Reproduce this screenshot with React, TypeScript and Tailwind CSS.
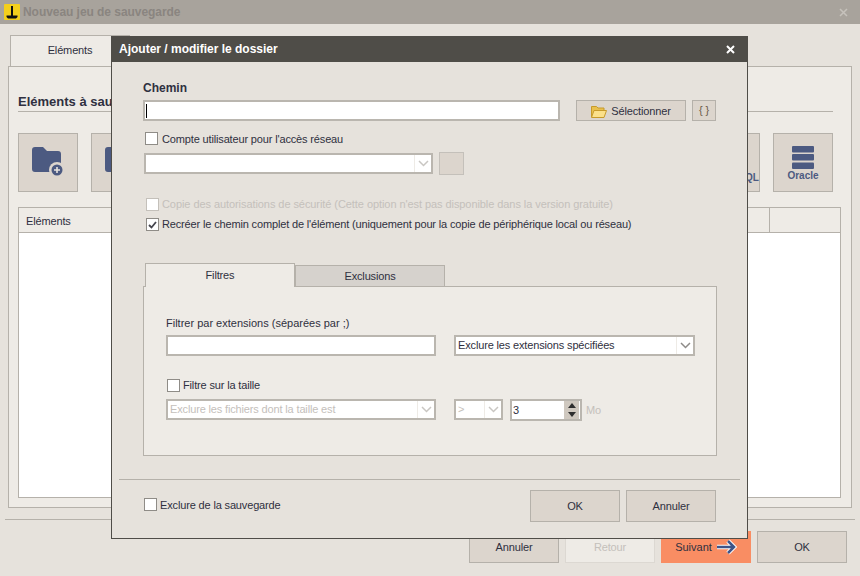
import { ReactNode } from "react";

const Chevron = ({ light }: { light?: boolean }) => (
  <svg width="11" height="7" viewBox="0 0 11 7" fill="none">
    <path d="M1 1l4.5 4.5L10 1" stroke={light ? "#c9c6c2" : "#8e8b88"} strokeWidth="1.5" />
  </svg>
);

const Check = ({ checked, dim }: { checked?: boolean; dim?: boolean }) => (
  <span className={`flex h-[13px] w-[13px] shrink-0 items-center justify-center border bg-white ${dim ? "border-[#c4c0ba]" : "border-[#8f8c87]"}`}>
    {checked && (
      <svg width="9" height="8" viewBox="0 0 9 8" fill="none">
        <path d="M1 4l2.5 2.5L8 1" stroke="#44444c" strokeWidth="1.8" />
      </svg>
    )}
  </span>
);

const Combo = ({ text, dim, className }: { text?: string; dim?: boolean; className: string }) => (
  <div className={`flex h-[21px] items-center border-2 border-[#bab6af] bg-white ${className}`}>
    <span className={`min-w-0 flex-1 overflow-hidden whitespace-nowrap pl-[2px] leading-[17px] ${dim ? "text-[#c4c0bb]" : ""}`}>{text}</span>
    <span className="flex h-full w-[17px] items-center justify-center border-l border-[#eeebe6]">
      <Chevron light={dim} />
    </span>
  </div>
);

const Btn = ({ children, className = "" }: { children: ReactNode; className?: string }) => (
  <button className={`flex items-center justify-center border border-[#b5b1aa] bg-[#dcd5cd] ${className}`}>{children}</button>
);

const FolderPlus = () => (
  <svg width="33" height="31" viewBox="0 0 33 31">
    <path d="M0 3a3 3 0 0 1 3-3h8l4 4h11a3 3 0 0 1 3 3v15a3 3 0 0 1-3 3H3a3 3 0 0 1-3-3z" fill="#4c5a81" />
    <circle cx="25" cy="23" r="8" fill="#dcd5cd" />
    <circle cx="25" cy="23" r="5.5" fill="#4c5a81" />
    <path d="M25 20v6M22 23h6" stroke="#e8e4df" strokeWidth="1.6" />
  </svg>
);

const StackIcon = () => (
  <svg width="22" height="23" viewBox="0 0 22 23" fill="#4c5a81">
    <rect width="22" height="6.5" rx="1" />
    <rect y="8" width="22" height="6.5" rx="1" />
    <rect y="16.500" width="22" height="6.5" rx="1" />
  </svg>
);

const FolderOpen = () => (
  <svg width="16" height="13" viewBox="0 0 16 13">
    <path d="M.5 12V1.500h5l1.500 1.500h6v2.500" fill="#e9c04e" stroke="#c79a2a" />
    <path d="M.5 12.500l2.500-7h12.500l-2.500 7z" fill="#fbe08a" stroke="#c79a2a" />
  </svg>
);

const ArrowRight = () => (
  <svg width="21" height="16" viewBox="0 0 21 16">
    <path d="M1 8h16M12 2l6 6-6 6" fill="none" stroke="#fff" strokeWidth="4.500" />
    <path d="M1 8h16M12 2l6 6-6 6" fill="none" stroke="#3f5488" strokeWidth="2.500" />
  </svg>
);

const Logo = () => (
  <svg width="16" height="16" viewBox="0 0 16 16" className="ml-1 shrink-0">
    <rect width="16" height="16" rx="1" fill="#f4cf1c" />
    <path d="M7 2h2v9.500h4.500v1.500L12 14.500H4L2.500 13v-1.500H7z" fill="#111" />
  </svg>
);

const Dialog = () => (
  <div className="absolute left-[111px] top-[36px] flex h-[503px] w-[637px] flex-col border-b border-l border-r border-[#4f4d48] bg-[#e6e2dc]">
    <div className="-mx-px flex h-[26px] shrink-0 items-center justify-between bg-[#4f4d48] pl-[8px] pr-[13px] text-[12px] tracking-normal text-white">
      <span className="font-bold">Ajouter / modifier le dossier</span>
      <svg width="9" height="9" viewBox="0 0 9 9" fill="none">
        <path d="M1 1l7 7M8 1L1 8" stroke="#fff" strokeWidth="2" />
      </svg>
    </div>

    <div className="flex-1 pl-[31px]">
      <div className="mt-[18px] h-[20px] text-[12px] font-bold leading-[16px] tracking-normal">Chemin</div>
      <div className="flex items-center">
        <div className="flex h-[21px] w-[417px] items-center border-2 border-[#bab6af] bg-white pl-[1px]">
          <span className="h-[14px] w-px bg-black" />
        </div>
        <Btn className="ml-[16px] h-[21px] w-[110px] gap-[4px] pt-px">
          <FolderOpen />
          Sélectionner
        </Btn>
        <Btn className="ml-[6px] h-[21px] w-[24px] text-[#6b5a48]">{"{ }"}</Btn>
      </div>

      <div className="ml-[2px] mt-[11px] flex items-center gap-[4px]">
        <Check />
        <span className="pt-px">Compte utilisateur pour l'accès réseau</span>
      </div>
      <div className="ml-px mt-[7px] flex items-center gap-[6px]">
        <Combo dim className="w-[289px]" />
        <span className="h-[23px] w-[25px] border border-[#c4c0ba] bg-[#dcd5cd]" />
      </div>

      <div className="ml-[3px] mt-[23px] flex items-center gap-[3px] tracking-[-0.07px] text-[#c4c0bb]">
        <Check dim />
        <span>Copie des autorisations de sécurité (Cette option n'est pas disponible dans la version gratuite)</span>
      </div>
      <div className="ml-[3px] mt-[7px] flex items-center gap-[3px]">
        <Check checked />
        <span>Recréer le chemin complet de l'élément (uniquement pour la copie de périphérique local ou réseau)</span>
      </div>

      <div className="ml-[2px] mt-[32px] flex items-end">
        <div className="relative z-10 -mb-px flex h-[24px] w-[150px] items-center justify-center border border-b-0 border-[#b5b1aa] bg-[#eeebe6]">Filtres</div>
        <div className="flex h-[21px] w-[150px] items-center justify-center border border-b-0 border-[#b5b1aa] bg-[#d6d2cd]">Exclusions</div>
      </div>
      <div className="h-[170px] w-[574px] border border-[#b5b1aa] bg-[#eeebe6] pl-[22px]">
        <div className="mt-[28px] h-[20px] leading-[16px] tracking-normal">Filtrer par extensions (séparées par ;)</div>
        <div className="flex">
          <div className="h-[21px] w-[270px] border-2 border-[#bab6af] bg-white" />
          <Combo text="Exclure les extensions spécifiées" className="ml-[18px] w-[241px]" />
        </div>
        <div className="ml-px mt-[23px] flex items-center gap-[3px]">
          <Check />
          <span>Filtre sur la taille</span>
        </div>
        <div className="mt-[7px] flex items-start">
          <Combo dim text="Exclure les fichiers dont la taille est" className="w-[270px]" />
          <Combo dim text=">" className="ml-[18px] w-[49px]" />
          <div className="ml-[7px] flex h-[22px] w-[72px] items-center border-2 border-[#bab6af] bg-white pl-[1px]">
            <span className="flex-1">3</span>
            <span className="mr-px flex h-[18px] w-[15px] flex-col items-center justify-around bg-[#cfc8bf]">
              <span className="h-0 w-0 border-x-[4px] border-b-[5px] border-x-transparent border-b-[#2e2e2e]" />
              <span className="h-0 w-0 border-x-[4px] border-t-[5px] border-x-transparent border-t-[#2e2e2e]" />
            </span>
          </div>
          <span className="ml-[4px] self-center text-[#c4c0bb]">Mo</span>
        </div>
      </div>
    </div>

    <div className="mx-[7px] border-t border-[#b5b1aa]" />
    <div className="flex h-[58px] shrink-0 items-start justify-between pl-[32px] pr-[31px] pt-[10px]">
      <div className="mt-[8px] flex items-center gap-[3px]">
        <Check />
        <span className="pt-[2px]">Exclure de la sauvegarde</span>
      </div>
      <div className="flex gap-[6px]">
        <Btn className="h-[32px] w-[90px]">OK</Btn>
        <Btn className="h-[32px] w-[90px]">Annuler</Btn>
      </div>
    </div>
  </div>
);

export default function App() {
  return (
    <div className="relative flex h-[576px] w-[860px] flex-col overflow-hidden bg-[#e6e2dc] font-['Liberation_Sans',sans-serif] text-[11px] leading-none tracking-[-0.15px] text-[#2f3040]">
      <div className="flex h-6 shrink-0 items-center bg-[#a8a39c]">
        <Logo />
        <span className="ml-[3px] flex-1 text-[12px] font-bold tracking-[-0.05px] text-[#8a8580]">Nouveau jeu de sauvegarde</span>
        <svg width="9" height="9" viewBox="0 0 9 9" fill="none" className="mr-[12px]">
          <path d="M1 1l7 7M8 1L1 8" stroke="#c6c2bc" strokeWidth="1.5" />
        </svg>
      </div>

      <div className="ml-[10px] mt-[11px] flex h-[31px] w-[120px] shrink-0 items-center justify-center border border-b-0 border-[#b5b1aa] bg-[#eeebe6] pb-[2px]">
        Eléments
      </div>

      <div className="mx-[8px] h-[442px] shrink-0 border border-[#b5b1aa] bg-[#eeebe6] pl-[9px]">
        <div className="mr-[18px] mt-[27px] flex h-[18px] items-start border-b border-[#b5b1aa] pt-px text-[13px] font-bold tracking-normal">Eléments à sauvegarder</div>
        <div className="mt-[21px] flex justify-between pr-[18px]">
          <div className="flex gap-[13px]">
            <Btn className="h-[59px] w-[60px]"><FolderPlus /></Btn>
            <Btn className="h-[59px] w-[60px]"><FolderPlus /></Btn>
          </div>
          <div className="flex gap-[13px]">
            <Btn className="h-[59px] w-[60px] items-end whitespace-nowrap pb-[8px] text-[10px] font-bold tracking-normal text-[#4c5a81]">PostgreSQL</Btn>
            <Btn className="h-[59px] w-[60px] flex-col justify-start gap-[2px] pt-[12px] text-[10px] font-bold tracking-normal text-[#4c5a81]">
              <StackIcon />
              Oracle
            </Btn>
          </div>
        </div>
        <div className="mt-[15px] flex h-[291px] w-[823px] flex-col border border-[#b5b1aa] bg-white">
          <div className="flex h-[25px] shrink-0 items-center border-b border-[#b5b1aa] bg-[#eeebe6] pl-[7px]">
            <span className="flex-1 pt-[2px]">Eléments</span>
            <span className="h-full w-[71px] border-l border-[#b5b1aa]" />
          </div>
        </div>
      </div>

      <div className="mx-[5px] mt-[11px] shrink-0 border-t border-[#b5b1aa]" />

      <div className="mr-[13px] mt-[11px] flex justify-end gap-[6px]">
        <Btn className="h-[32px] w-[90px]">Annuler</Btn>
        <Btn className="h-[32px] w-[90px] border-[#dcd8d2] bg-[#eeebe6] text-[#c4c0bb]">Retour</Btn>
        <Btn className="h-[32px] w-[90px] gap-[4px] border-[#f98d63] bg-[#f98d63] tracking-normal">
          Suivant
          <ArrowRight />
        </Btn>
        <Btn className="h-[32px] w-[90px]">OK</Btn>
      </div>

      <Dialog />
    </div>
  );
}
